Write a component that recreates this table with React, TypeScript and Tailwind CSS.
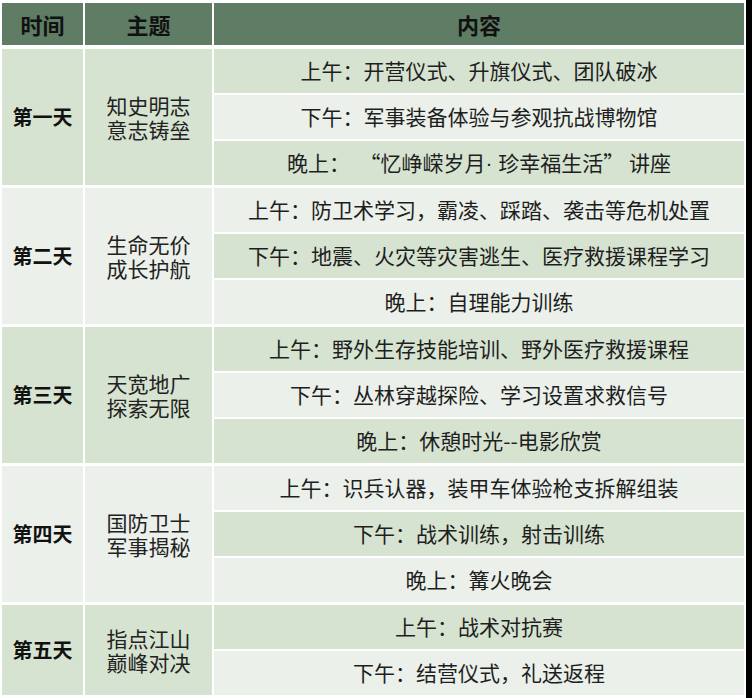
import React from "react";

type Day = { label: string; theme: [string, string]; items: React.ReactNode[] };

const days: Day[] = [
  {
    label: "第一天",
    theme: ["知史明志", "意志铸垒"],
    items: [
      "上午：开营仪式、升旗仪式、团队破冰",
      "下午：军事装备体验与参观抗战博物馆",
      <>
        晚上：{"  "}“忆峥嵘岁月
        <span style={{ fontFamily: '"Liberation Sans", sans-serif' }}>· </span>
        珍幸福生活”{" "}讲座
      </>,
    ],
  },
  {
    label: "第二天",
    theme: ["生命无价", "成长护航"],
    items: [
      "上午：防卫术学习，霸凌、踩踏、袭击等危机处置",
      "下午：地震、火灾等灾害逃生、医疗救援课程学习",
      "晚上：自理能力训练",
    ],
  },
  {
    label: "第三天",
    theme: ["天宽地广", "探索无限"],
    items: [
      "上午：野外生存技能培训、野外医疗救援课程",
      "下午：丛林穿越探险、学习设置求救信号",
      "晚上：休憩时光--电影欣赏",
    ],
  },
  {
    label: "第四天",
    theme: ["国防卫士", "军事揭秘"],
    items: [
      "上午：识兵认器，装甲车体验枪支拆解组装",
      "下午：战术训练，射击训练",
      "晚上：篝火晚会",
    ],
  },
  {
    label: "第五天",
    theme: ["指点江山", "巅峰对决"],
    items: ["上午：战术对抗赛", "下午：结营仪式，礼送返程"],
  },
];

const GREEN = "bg-[#d6e3d0]";
const LIGHT = "bg-[#ebf0ea]";

export default function App() {
  let rowIndex = 0;
  return (
    <div
      className="w-[752px] h-[698px] bg-white flex overflow-hidden"
      style={{ fontFamily: '"Noto Sans CJK SC", "Noto Sans", sans-serif' }}
    >
      <div className="w-[746px] pl-[2px] pt-[3px] flex flex-col">
        <div className="flex gap-[2px] h-[42px] text-[22px] font-bold text-[#111]">
          <div className="w-[81px] bg-[#5f7c64] flex items-center justify-center">时间</div>
          <div className="w-[127px] bg-[#5f7c64] flex items-center justify-center">主题</div>
          <div className="w-[530px] bg-[#5f7c64] flex items-center justify-center">内容</div>
        </div>
        <div className="mt-[4px] flex flex-col gap-[3px]">
          {days.map((d) => {
            const startIdx = rowIndex;
            rowIndex += d.items.length;
            const dayBg = startIdx % 2 === 0 ? GREEN : LIGHT;
            return (
              <div key={d.label} className="flex gap-[2px]">
                <div
                  className={`w-[81px] ${dayBg} flex items-center justify-center text-[20px] font-bold text-[#111]`}
                >
                  {d.label}
                </div>
                <div
                  className={`w-[127px] ${dayBg} flex flex-col items-center justify-center text-[21px] text-[#222]`}
                >
                  <div className="h-[24px] leading-[24px]">{d.theme[0]}</div>
                  <div className="h-[24px] leading-[24px]">{d.theme[1]}</div>
                </div>
                <div className="w-[530px] flex flex-col gap-[2px]">
                  {d.items.map((it, i) => (
                    <div
                      key={i}
                      className={`h-[44px] ${(startIdx + i) % 2 === 0 ? GREEN : LIGHT} flex items-center justify-center text-[21px] text-[#1e1e1e] whitespace-pre`}
                    >
                      {it}
                    </div>
                  ))}
                </div>
              </div>
            );
          })}
        </div>
      </div>
      <div className="w-[6px] h-full bg-black" />
    </div>
  );
}
